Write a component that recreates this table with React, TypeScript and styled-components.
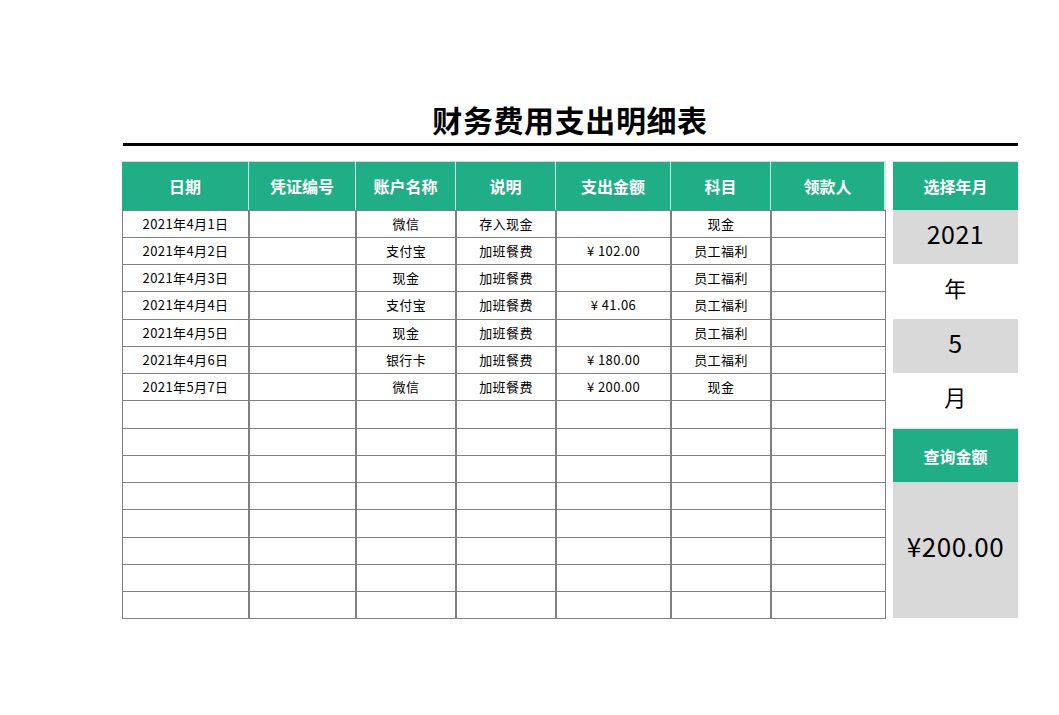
import React from "react";
import styled, { createGlobalStyle } from "styled-components";

const Global = createGlobalStyle`
  html, body { margin: 0; padding: 0; background: #ffffff; }
  body { font-family: "Noto Sans CJK SC", "Noto Sans", sans-serif; color: #000; }
  * { box-sizing: border-box; }
`;

const GREEN = "#20ae87";
const GRAY = "#d9d9d9";
const LINE = "#808080";

const Page = styled.div`
  width: 1059px;
  height: 715px;
  padding: 99px 0 0 122px;
`;

const TitleBlock = styled.div`
  width: 896px;
  display: flex;
  flex-direction: column;
`;

const Title = styled.h1`
  margin: 0;
  height: 44px;
  font-size: 30px;
  line-height: 41px;
  font-weight: 700;
  text-align: center;
  letter-spacing: 0.6px;
`;

const Rule = styled.div`
  height: 3px;
  background: #000;
  margin-left: 1px;
`;

const Main = styled.div`
  margin-top: 15px;
  display: flex;
  gap: 8px;
  align-items: flex-start;
`;

const Table = styled.div`
  width: 763px;
  display: grid;
  grid-template-columns: 127px 107px 100px 100px 115px 100px 114px;
  border-left: 1px solid ${LINE};
`;

const HeadCell = styled.div`
  height: 49px;
  margin-left: -1px;
  background: ${GREEN};
  color: #fff;
  font-weight: 700;
  font-size: 16px;
  display: flex;
  align-items: center;
  justify-content: center;
  border-top: 1px solid #cfd8d4;
  border-right: 2px solid #c8ece0;
  &:last-of-type { border-right: 1px solid ${LINE}; }
`;

const Cell = styled.div<{ $h: number; $last: boolean; $first: boolean }>`
  height: ${(p) => p.$h}px;
  border-right: ${(p) => (p.$last ? "1px" : "2px")} solid ${LINE};
  border-bottom: 1px solid ${LINE};
  border-top: ${(p) => (p.$first ? `1px solid ${LINE}` : "none")};
  padding-bottom: 2px;
  font-size: 13px;
  letter-spacing: 0.4px;
  display: flex;
  align-items: center;
  justify-content: center;
  white-space: nowrap;
`;

const Side = styled.div`
  width: 125px;
  display: flex;
  flex-direction: column;
`;

const SideHead = styled.div<{ $h: number }>`
  height: ${(p) => p.$h}px;
  background: ${GREEN};
  color: #fff;
  font-weight: 700;
  font-size: 16px;
  display: flex;
  align-items: center;
  justify-content: center;
  border-top: 1px solid #cfe6de;
`;

const SideBox = styled.div<{ $h: number; $fill: boolean; $size: number }>`
  height: ${(p) => p.$h}px;
  background: ${(p) => (p.$fill ? GRAY : "#fff")};
  font-size: ${(p) => p.$size}px;
  padding-bottom: 9px;
  display: flex;
  align-items: center;
  justify-content: center;
  letter-spacing: 0.5px;
`;

const headers = ["日期", "凭证编号", "账户名称", "说明", "支出金额", "科目", "领款人"];

const rows: string[][] = [
  ["2021年4月1日", "", "微信", "存入现金", "", "现金", ""],
  ["2021年4月2日", "", "支付宝", "加班餐费", "¥ 102.00", "员工福利", ""],
  ["2021年4月3日", "", "现金", "加班餐费", "", "员工福利", ""],
  ["2021年4月4日", "", "支付宝", "加班餐费", "¥ 41.06", "员工福利", ""],
  ["2021年4月5日", "", "现金", "加班餐费", "", "员工福利", ""],
  ["2021年4月6日", "", "银行卡", "加班餐费", "¥ 180.00", "员工福利", ""],
  ["2021年5月7日", "", "微信", "加班餐费", "¥ 200.00", "现金", ""],
];

const allRows = Array.from({ length: 15 }, (_, i) => rows[i] ?? ["", "", "", "", "", "", ""]);
const heights = allRows.map((_, i) => (i === 3 || i === 7 || i === 11 ? 28 : 27));

export default function App() {
  return (
    <>
      <Global />
      <Page>
        <TitleBlock>
          <Title>财务费用支出明细表</Title>
          <Rule />
        </TitleBlock>
        <Main>
          <Table>
            {headers.map((h) => (
              <HeadCell key={h}>{h}</HeadCell>
            ))}
            {allRows.map((r, i) =>
              r.map((c, j) => (
                <Cell
                  key={`${i}-${j}`}
                  $h={heights[i] + (i === 0 ? 1 : 0)}
                  $last={j === 6}
                  $first={i === 0}
                >
                  {c}
                </Cell>
              ))
            )}
          </Table>
          <Side>
            <SideHead $h={49}>选择年月</SideHead>
            <SideBox $h={54} $fill $size={25}>2021</SideBox>
            <SideBox $h={55} $fill={false} $size={22}>年</SideBox>
            <SideBox $h={54} $fill $size={25}>5</SideBox>
            <SideBox $h={55} $fill={false} $size={22}>月</SideBox>
            <SideHead $h={54}>查询金额</SideHead>
            <SideBox $h={136} $fill $size={26}>¥200.00</SideBox>
          </Side>
        </Main>
      </Page>
    </>
  );
}
